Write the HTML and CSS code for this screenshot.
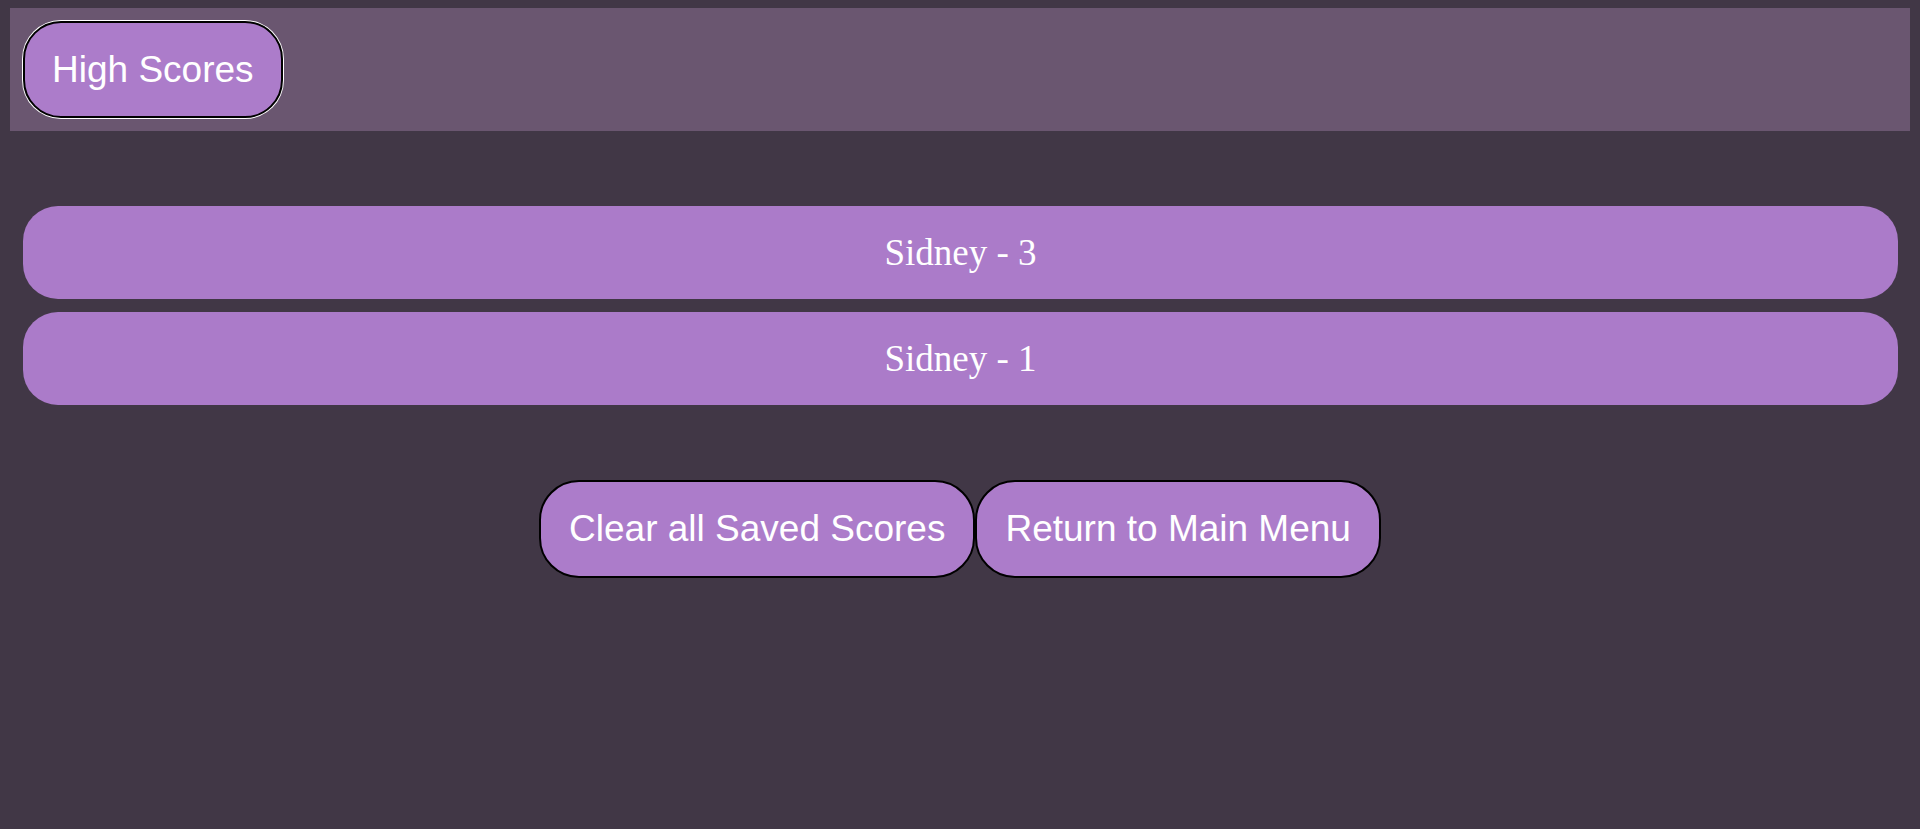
FILE: index.html
```html
<!DOCTYPE html>
<html lang="en">
<head>
<meta charset="utf-8">
<title>High Scores</title>
<link rel="stylesheet" href="styles.css">
</head>
<body>
<header class="topbar">
  <button class="title-btn">High Scores</button>
</header>
<main class="content">
  <ul class="scores">
    <li class="score">Sidney - 3</li>
    <li class="score">Sidney - 1</li>
  </ul>
  <div class="actions">
    <button class="action-btn">Clear all Saved Scores</button>
    <button class="action-btn">Return to Main Menu</button>
  </div>
</main>
</body>
</html>
```

FILE: styles.css
```css
html, body {
  margin: 0;
  padding: 0;
}
body {
  background: #413746;
  height: 829px;
  overflow: hidden;
}
.topbar {
  margin: 8px 10px 0 10px;
  height: 123px;
  box-sizing: border-box;
  padding: 13px;
  background: #6a5670;
  display: flex;
  align-items: flex-start;
}
.title-btn {
  font-family: "Liberation Sans", Arial, sans-serif;
  font-size: 37px;
  line-height: normal;
  color: #fff;
  background: #ac7cca;
  border: 2px solid #000;
  box-shadow: 0 0 0 1px #fff;
  border-radius: 38px;
  padding: 25.5px 27px;
  margin: 0;
}
.content {
  padding: 0 22px 0 23px;
  margin-top: 75px;
}
.scores {
  list-style: none;
  margin: 0;
  padding: 0;
  display: flex;
  flex-direction: column;
  gap: 13px;
}
.score {
  height: 93px;
  border-radius: 35px;
  background: #ab7bc9;
  color: #fff;
  font-family: "Liberation Serif", "Times New Roman", serif;
  font-size: 37px;
  display: flex;
  align-items: center;
  justify-content: center;
}
.actions {
  margin-top: 75px;
  display: flex;
  justify-content: center;
  margin-left: -23px;
  margin-right: -22px;
}
.action-btn {
  font-family: "Liberation Sans", Arial, sans-serif;
  font-size: 37px;
  line-height: normal;
  color: #fff;
  background: #ac7cca;
  border: 2px solid #000;
  border-radius: 40px;
  padding: 26px 28px;
  margin: 0;
}
```
